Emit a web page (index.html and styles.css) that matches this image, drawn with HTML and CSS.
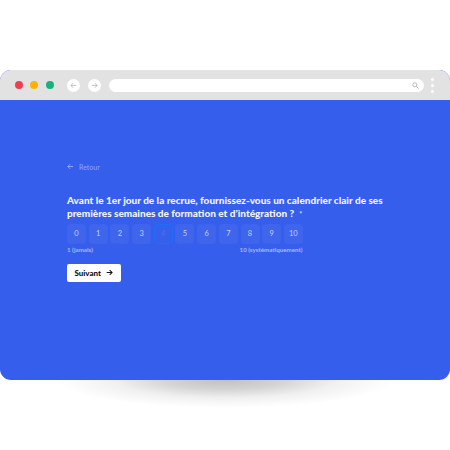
FILE: index.html
```html
<!DOCTYPE html>
<html lang="fr">
<head>
<meta charset="utf-8">
<title>Formulaire</title>
<link rel="stylesheet" href="styles.css">
</head>
<body>
<div class="stage">
  <div class="glow"></div>
  <div class="window">
    <div class="chrome">
      <span class="dot red"></span>
      <span class="dot yellow"></span>
      <span class="dot green"></span>
      <span class="nav first"><svg viewBox="0 0 8 8" width="7" height="7"><path d="M7 4H1M3.6 1.3 1 4l2.6 2.7" fill="none" stroke="#b5b5b5" stroke-width=".9"/></svg></span>
      <span class="nav"><svg viewBox="0 0 8 8" width="7" height="7"><path d="M1 4h6M4.4 1.3 7 4 4.4 6.7" fill="none" stroke="#b5b5b5" stroke-width=".9"/></svg></span>
      <div class="address"><svg viewBox="0 0 8 8" width="7" height="7"><circle cx="3.2" cy="3.2" r="2.3" fill="none" stroke="#a8a8a8" stroke-width=".9"/><path d="m5 5 2.4 2.4" stroke="#a8a8a8" stroke-width="1.1"/></svg></div>
      <div class="menu"><i></i><i></i><i></i></div>
    </div>
    <main class="content">
      <div class="back"><svg viewBox="0 0 8 8" width="7" height="7"><path d="M7 4H1M3.6 1.3 1 4l2.6 2.7" fill="none" stroke="#9db2f7" stroke-width="1"/></svg><span>Retour</span></div>
      <h1 class="question">Avant le 1er jour de la recrue, fournissez-vous un calendrier clair de ses premières semaines de formation et d’intégration ?</h1>
      <div class="scale">
        <span class="cell">0</span><span class="cell">1</span><span class="cell">2</span><span class="cell">3</span><span class="cell active">4</span><span class="cell">5</span><span class="cell">6</span><span class="cell">7</span><span class="cell">8</span><span class="cell">9</span><span class="cell">10</span>
      </div>
      <div class="legend"><span>1 (jamais)</span><span>10 (systématiquement)</span></div>
      <button class="next">Suivant <svg viewBox="0 0 8 8" width="7" height="7"><path d="M.8 4h6M4.2 1.3 6.9 4 4.2 6.7" fill="none" stroke="#111" stroke-width="1.2"/></svg></button>
    </main>
  </div>
</div>
</body>
</html>
```
FILE: styles.css
```css
* { box-sizing: border-box; }
html, body { margin: 0; background: #fff; }
body { font-family: Lato, "Liberation Sans", sans-serif; width: 450px; height: 450px; overflow: hidden; }
.stage { position: relative; padding-top: 70px; height: 450px; }
.glow {
  position: absolute; left: 55px; top: 351px; width: 340px; height: 57px;
  background: radial-gradient(closest-side, rgba(0,0,0,.25) 0%, rgba(0,0,0,.17) 35%, rgba(0,0,0,.06) 65%, rgba(0,0,0,.015) 90%, rgba(0,0,0,0) 100%);
}
.window { position: relative; height: 309.5px; border-radius: 11px; overflow: hidden; background: #365eec; display: flex; flex-direction: column; }
.chrome { height: 29.5px; flex: none; background: #e2e2e2; display: flex; align-items: center; padding-left: 15px; padding-top: 1px; }
.dot { width: 8px; height: 8px; border-radius: 50%; margin-right: 7.3px; }
.red { background: #f23c50; }
.yellow { background: #ffb300; }
.green { background: #14b27e; }
.nav { width: 13px; height: 13px; border-radius: 50%; background: #fff; display: flex; align-items: center; justify-content: center; margin-right: 8.3px; }
.nav.first { margin-left: 5.7px; }
.address { width: 315px; height: 13px; margin-left: -0.3px; border-radius: 6.5px; background: #fff; display: flex; align-items: center; justify-content: flex-end; padding-right: 5px; }
.menu { display: flex; flex-direction: column; gap: 3px; margin-left: 7.5px; }
.menu i { width: 3px; height: 3px; border-radius: 50%; background: #fff; display: block; }
.content { padding: 62px 0 0 67px; color: #fff; }
.back { display: flex; align-items: center; gap: 5px; font-size: 7px; line-height: 10px; color: #8ea6f5; }
.question { margin: 22px 0 0; width: 330px; font-size: 10.03px; line-height: 13px; font-weight: 900; color: #f1f4ff; }
.question::after { content: "*"; font-size: 7px; margin-left: 5px; color: #c6d3fb; }
.scale { display: flex; gap: 2.7px; margin-top: 3.5px; }
.cell { width: 19px; height: 19.5px; border-radius: 3px; background: #3f65ed; border: 1px solid #3e64ed; color: #c4d1fb; font-size: 7.5px; display: flex; align-items: center; justify-content: center; }
.cell.active { background: #3560ec; border-color: #1f6cff; color: #4a70ef; }
.legend { width: 235.5px; display: flex; justify-content: space-between; margin-top: 2px; font-size: 6.2px; line-height: 8px; font-weight: 700; color: #a9bbf8; }
.next { margin-top: 10px; width: 53.5px; height: 18px; border: 0; border-radius: 2px; background: #fff; color: #111; font: 900 8px Lato, sans-serif; display: flex; align-items: center; justify-content: center; gap: 5px; padding: 0; }
```
